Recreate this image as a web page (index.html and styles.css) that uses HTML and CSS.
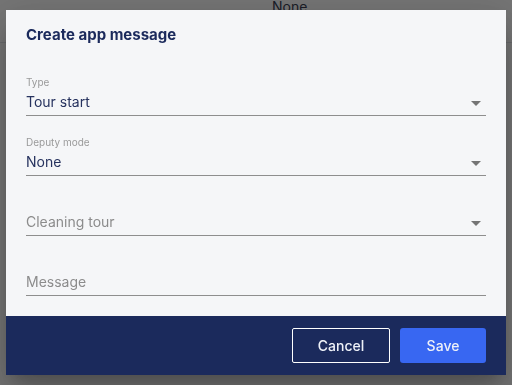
FILE: index.html
```html
<!DOCTYPE html>
<html lang="en">
<head>
  <meta charset="UTF-8" />
  <title>Create app message</title>
  <meta name="viewport" content="width=device-width, initial-scale=1" />
  <link rel="stylesheet" href="styles.css">
</head>
<body>
  <!-- Page behind the dialog -->
  <div class="page">
    <div class="page-row">
      <span class="page-cell">None</span>
    </div>
  </div>

  <div class="backdrop">
    <div class="dialog">
      <div class="dialog-body">
        <h2 class="dialog-title">Create app message</h2>

        <div class="field">
          <div class="field-label">Type</div>
          <div class="field-input">
            <span class="field-value">Tour start</span>
            <span class="caret"></span>
          </div>
        </div>

        <div class="field">
          <div class="field-label">Deputy mode</div>
          <div class="field-input">
            <span class="field-value">None</span>
            <span class="caret"></span>
          </div>
        </div>

        <div class="field">
          <div class="field-label"></div>
          <div class="field-input">
            <span class="field-value placeholder">Cleaning tour</span>
            <span class="caret"></span>
          </div>
        </div>

        <div class="field">
          <div class="field-label"></div>
          <div class="field-input">
            <span class="field-value placeholder">Message</span>
          </div>
        </div>
      </div>

      <div class="dialog-footer">
        <button class="btn btn-outline">Cancel</button>
        <button class="btn btn-primary">Save</button>
      </div>
    </div>
  </div>
</body>
</html>
```

FILE: styles.css
```css
html, body {
  margin: 0; padding: 0; height: 100%; overflow: hidden;
  background: #fff; font-family: Inter, "Noto Sans", sans-serif;
}

.page-row {
  height: 45px; border-bottom: 1px solid #e3e5ea;
  padding-left: 272px; box-sizing: border-box;
}
.page-cell {
  display: block; font-size: 14px; line-height: 18px;
  color: #3a3f55; margin-top: -2px;
}

.backdrop {
  position: fixed; inset: 0;
  background: rgba(0, 0, 0, 0.54);
  display: flex; align-items: center; justify-content: center;
}

.dialog {
  width: 500px; height: 365px;
  background: #f5f6f8;
  display: flex; flex-direction: column;
  box-shadow: 0 11px 15px -7px rgba(0,0,0,0.2),
              0 24px 38px 3px rgba(0,0,0,0.14),
              0 9px 46px 8px rgba(0,0,0,0.12);
}

.dialog-body {
  flex: 1;
  padding: 15px 20px 0 20px;
}

.dialog-title {
  margin: 0 0 31px 0;
  font-size: 15px; line-height: 20px; font-weight: 700;
  color: #1b2a5c;
}

.field { margin-bottom: 20px; }

.field-label {
  height: 12px; font-size: 10px; line-height: 12px;
  color: #9a9a9a; margin-bottom: 4px;
}

.field-input {
  display: flex; align-items: center; justify-content: space-between;
  height: 20px; padding-bottom: 3px;
  border-bottom: 1px solid #8e8e8e;
}

.field-value {
  font-size: 14px; line-height: 20px; color: #27335f;
}
.field-value.placeholder { color: #8c8c8c; }

.caret {
  width: 0; height: 0; margin-right: 5px; margin-top: 2px;
  border-left: 5px solid transparent;
  border-right: 5px solid transparent;
  border-top: 5px solid #757575;
}

.dialog-footer {
  height: 59px; box-sizing: border-box;
  background: #1b2a5c;
  display: flex; justify-content: flex-end; align-items: flex-start;
  gap: 10px; padding: 12px 20px 0 0;
}

.btn {
  height: 35px; font-family: inherit; font-size: 14px; font-weight: 500;
  color: #eef1f8; cursor: pointer; border-radius: 2px;
}
.btn-outline {
  width: 98px; background: transparent; border: 1px solid #fff;
}
.btn-primary {
  width: 86px; background: #3867f2; border: none; border-radius: 3px;
}
```
